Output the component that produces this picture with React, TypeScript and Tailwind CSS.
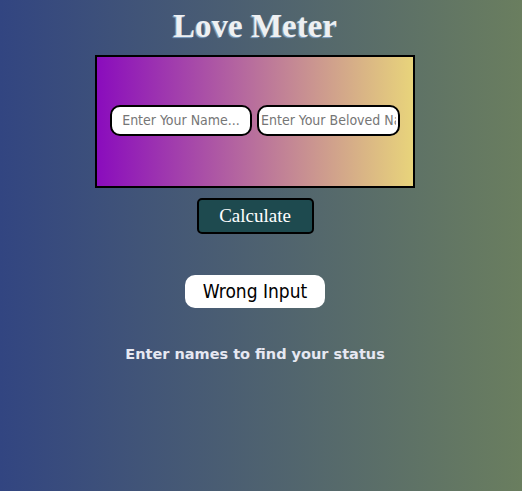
import { useState } from "react";

export default function App() {
  const [name, setName] = useState("");
  const [beloved, setBeloved] = useState("");

  return (
    <main className="min-h-[491px] w-full bg-[linear-gradient(to_right,#324581,#6a7e5f)] flex flex-col items-center pt-[6px] pr-[12px]">
      <h1 className="font-['Liberation_Serif',serif] text-[33px] font-bold leading-[40px] text-[#eef0f2] [text-shadow:-1px_1px_1px_#7fa4c8]">
        Love Meter
      </h1>
      <div className="mt-[9px] w-[320px] h-[133px] border-2 border-black bg-[linear-gradient(to_right,#8a0cbd,#e8d47b)] flex items-center justify-center gap-[5px] pb-[3px]">
        <input
          value={name}
          onChange={(e) => setName(e.target.value)}
          placeholder="Enter Your Name..."
          className="w-[142px] h-[31px] rounded-[10px] border-2 border-black bg-white px-[2px] text-center font-['DejaVu_Sans_Condensed','DejaVu_Sans',sans-serif] text-[14px] text-black placeholder:text-[#767676] outline-none"
        />
        <input
          value={beloved}
          onChange={(e) => setBeloved(e.target.value)}
          placeholder="Enter Your Beloved Name..."
          className="w-[143px] h-[31px] rounded-[10px] border-2 border-black bg-white px-[2px] text-center font-['DejaVu_Sans_Condensed','DejaVu_Sans',sans-serif] text-[14px] text-black placeholder:text-[#767676] outline-none"
        />
      </div>
      <button className="mt-[10px] w-[117px] h-[36px] rounded-[5px] border-2 border-black bg-[#1e4a4f] font-['Liberation_Serif',serif] text-[19px] text-white">
        Calculate
      </button>
      <div className="mt-[41px] w-[140px] h-[33px] rounded-[10px] bg-white flex items-center justify-center font-['DejaVu_Sans_Condensed','DejaVu_Sans',sans-serif] text-[19px] text-black">
        Wrong Input
      </div>
      <p className="mt-[36px] font-['DejaVu_Sans',sans-serif] text-[14.5px] font-bold text-[#e6e8f2]">
        Enter names to find your status
      </p>
    </main>
  );
}
